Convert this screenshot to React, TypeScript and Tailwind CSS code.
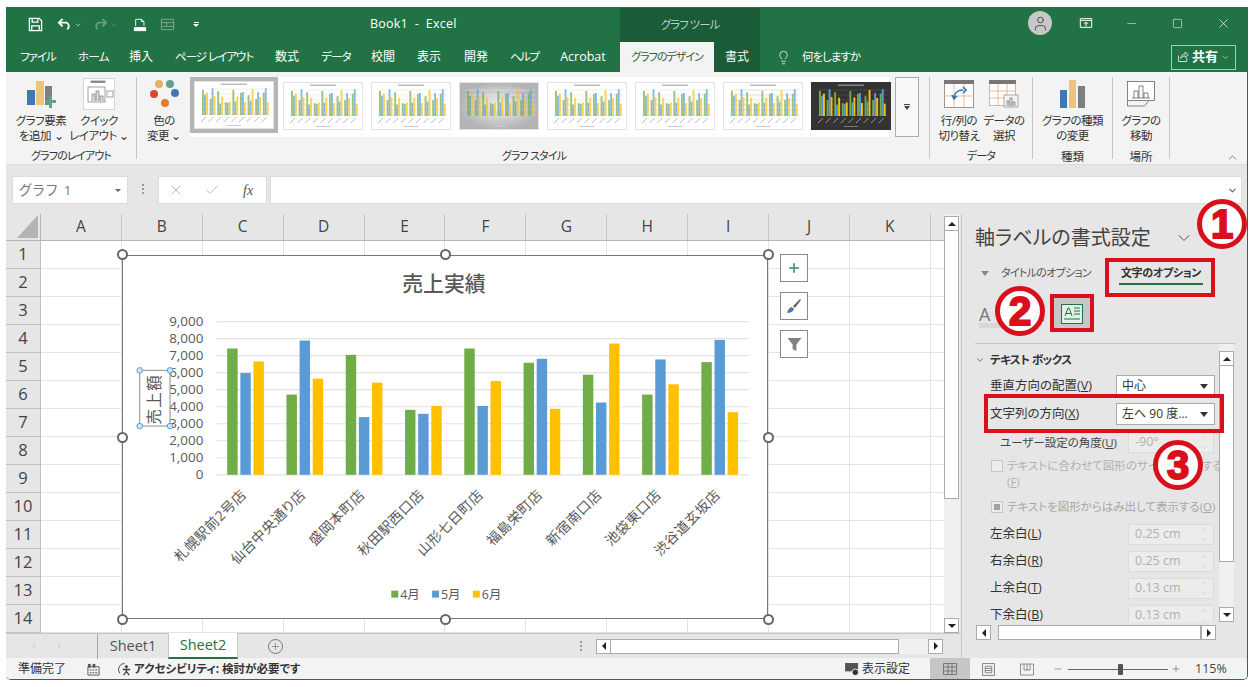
import { ChevronDown, ChevronUp, Lightbulb, Plus, X, Check, Minus, Square, User, ChevronRight, ChevronLeft } from 'lucide-react';

const bars = [
  [7420, 5980, 6660],
  [4714, 7890, 5650],
  [7050, 3390, 5415],
  [3818, 3584, 4050],
  [7420, 4050, 5510],
  [6584, 6818, 3877],
  [5883, 4247, 7714],
  [4714, 6779, 5318],
  [6623, 7928, 3680],
];
const shops = ['札幌駅前2号店', '仙台中央通り店', '盛岡本町店', '秋田駅西口店', '山形七日町店', '福島栄町店', '新宿南口店', '池袋東口店', '渋谷道玄坂店'];
const barColors = ['#70ad47', '#5b9bd5', '#ffc000'];
const columns = ['A', 'B', 'C', 'D', 'E', 'F', 'G', 'H', 'I', 'J', 'K'];
const rows = [1, 2, 3, 4, 5, 6, 7, 8, 9, 10, 11, 12, 13, 14];

const tabs = [
  { label: 'ファイル', cls: 'ml-[14px] w-[33px] text-[11.5px] tracking-[-1px]' },
  { label: 'ホーム', cls: 'ml-[25px] w-[30px] text-[11.5px] tracking-[-0.8px]' },
  { label: '挿入', cls: 'ml-[21px] w-[24px] text-[12px]' },
  { label: 'ページ レイアウト', cls: 'ml-[22px] w-[78px] text-[11.5px] tracking-[-1px]' },
  { label: '数式', cls: 'ml-[22px] w-[24px] text-[12px]' },
  { label: 'データ', cls: 'ml-[22px] w-[28px] text-[11.5px] tracking-[-0.8px]' },
  { label: '校閲', cls: 'ml-[22px] w-[24px] text-[12px]' },
  { label: '表示', cls: 'ml-[22px] w-[24px] text-[12px]' },
  { label: '開発', cls: 'ml-[23px] w-[24px] text-[12px]' },
  { label: 'ヘルプ', cls: 'ml-[22px] w-[28px] text-[11.5px] tracking-[-1.5px]' },
  { label: 'Acrobat', cls: 'ml-[22px] w-[46px] text-[12.5px]' },
];

function MiniChart({ variant, className }: { variant: 'plain' | 'gray' | 'dark' | 'striped' | 'grid'; className: string }) {
  const bg = variant === 'gray' ? 'url(#miniGray)' : variant === 'dark' ? '#333' : '#fff';
  const faded = variant === 'dark' ? 1 : 0.7;
  return (
    <svg viewBox="0 0 80 48" className={className}>
      <defs>
        <radialGradient id="miniGray">
          <stop offset="0" stopColor="#f4f4f4" />
          <stop offset="1" stopColor="#b4b4b4" />
        </radialGradient>
      </defs>
      <rect x="0.5" y="0.5" width="79" height="47" fill={bg} stroke={variant === 'dark' ? '#333' : '#e2e2e2'} />
      <rect x="27" y="2.5" width="26" height="1.5" fill={variant === 'dark' ? '#888' : '#bbb'} />
      {[8, 13, 18, 23, 28, 33].map((y) => (
        <line key={y} x1="7" x2="76" y1={y} y2={y} stroke={variant === 'grid' ? '#ccc' : variant === 'dark' ? '#555' : '#e4e4e4'} strokeWidth="0.6" />
      ))}
      {bars.map((group, i) =>
        group.map((v, j) => {
          const h = (v / 8000) * 27;
          return (
            <rect key={`${i}-${j}`} x={8 + i * 7.6 + j * 2} y={34 - h} width="1.9" height={h} fill={barColors[j]} opacity={faded} />
          );
        })
      )}
      {bars.map((_, i) => (
        <line key={i} x1={7 + i * 7.6} y1="41" x2={12 + i * 7.6} y2="36" stroke={variant === 'dark' ? '#999' : '#bbb'} strokeWidth="1" />
      ))}
      <rect x="33" y="44" width="14" height="1" fill={variant === 'dark' ? '#777' : '#ccc'} />
    </svg>
  );
}

function RibbonButton({ icon, top, bottom, className }: { icon: React.ReactNode; top: string; bottom: string; className: string }) {
  return (
    <div className={`flex flex-col items-center shrink-0 ${className}`}>
      <div className="h-[36px] flex items-center justify-center">{icon}</div>
      <div className="text-[11.5px] tracking-[-0.5px] leading-[15px] text-center whitespace-nowrap text-[#333] mt-[1px]">
        {top}
        <br />
        {bottom}
      </div>
    </div>
  );
}

function Spinner() {
  return (
    <div className="flex flex-col gap-[1px] text-[#c4c4c4]">
      <ChevronUp size={9} strokeWidth={1.5} />
      <ChevronDown size={9} strokeWidth={1.5} />
    </div>
  );
}

function NumField({ label, value }: { label: React.ReactNode; value: string }) {
  return (
    <div className="flex items-center justify-between h-[21px] mb-[6px] pl-[28px] pr-[5px]">
      <span className="text-[12.5px] text-[#333] whitespace-nowrap">{label}</span>
      <div className="w-[86px] h-[21px] border border-[#dcdcdc] bg-[#ececec] flex items-center justify-between pl-[6px] pr-[4px] text-[12.5px] text-[#b0b0b0]">
        {value}
        <Spinner />
      </div>
    </div>
  );
}

function Select({ value }: { value: string }) {
  return (
    <div className="w-[99px] h-[22px] border border-[#ababab] bg-white flex items-center justify-between pl-[5px] pr-[6px] text-[12px] text-[#333] whitespace-nowrap">
      {value}
      <span className="w-0 h-0 border-x-[4px] border-x-transparent border-t-[5px] border-t-[#333]" />
    </div>
  );
}

function ScrollBtn({ dir }: { dir: 'up' | 'down' | 'left' | 'right' }) {
  const arrow = {
    up: 'border-x-[4px] border-x-transparent border-b-[4px] border-b-[#222]',
    down: 'border-x-[4px] border-x-transparent border-t-[4px] border-t-[#222]',
    left: 'border-y-[4px] border-y-transparent border-r-[4px] border-r-[#222]',
    right: 'border-y-[4px] border-y-transparent border-l-[4px] border-l-[#222]',
  }[dir];
  return (
    <div className="w-[15px] h-[15px] shrink-0 bg-white border border-[#ababab] flex items-center justify-center">
      <span className={`w-0 h-0 ${arrow}`} />
    </div>
  );
}

function Mark({ n, className }: { n: string; className: string }) {
  return (
    <div className={`absolute w-[50px] h-[50px] rounded-full bg-white/90 border-[5px] border-[#d9101c] flex items-center justify-center text-[#d9101c] font-['Liberation_Sans',sans-serif] font-bold text-[40px] leading-none [-webkit-text-stroke:2px_#d9101c] ${className}`}>
      {n}
    </div>
  );
}

function Handle({ className }: { className: string }) {
  return <div className={`absolute w-[11px] h-[11px] rounded-full bg-white border-2 border-[#666] ${className}`} />;
}

function ChartSvg() {
  const y0 = 475;
  const scale = 154 / 9000;
  return (
    <svg viewBox="122 255 646 364" className="w-full h-full">
      <text x="444" y="290" textAnchor="middle" fontSize="21" fontWeight="500" fill="#595959">売上実績</text>
      {[0, 1, 2, 3, 4, 5, 6, 7, 8, 9].map((k) => {
        const y = y0 - k * 1000 * scale;
        return (
          <g key={k}>
            <line x1="215" x2="751" y1={y} y2={y} stroke="#e3e3e3" strokeWidth="1.2" />
            <text x="202" y={y + 4} textAnchor="end" fontSize="13.5" fill="#595959">
              {k === 0 ? '0' : `${k},000`}
            </text>
          </g>
        );
      })}
      {bars.map((group, i) => {
        const gx = 226 + i * 59.6;
        return (
          <g key={i}>
            {group.map((v, j) => (
              <rect key={j} x={gx + j * 13.2} y={y0 - v * scale} width="10.5" height={v * scale} fill={barColors[j]} />
            ))}
            <text
              textAnchor="end"
              fontSize="14"
              letterSpacing="0.5"
              fill="#595959"
              transform={`translate(${gx + 20},${y0 + 21}) rotate(-45)`}
            >
              {shops[i]}
            </text>
          </g>
        );
      })}
      {/* axis title */}
      <rect x="138" y="370" width="30.5" height="56" fill="none" stroke="#a0a0a0" strokeWidth="1.2" />
      <text transform="translate(158,399) rotate(-90)" textAnchor="middle" fontSize="15.5" letterSpacing="1.5" fill="#595959">売上額</text>
      {[[138, 370], [168.5, 370], [138, 426], [168.5, 426]].map(([x, y]) => (
        <circle key={`${x}${y}`} cx={x} cy={y} r="2.8" fill="#cfe6f7" stroke="#5b9bd5" strokeWidth="1" />
      ))}
      {/* legend */}
      {['4月', '5月', '6月'].map((t, i) => (
        <g key={t}>
          <rect x={391 + i * 41} y="591.5" width="7" height="7" fill={barColors[i]} />
          <text x={400 + i * 41} y="600" fontSize="12.5" fill="#595959">{t}</text>
        </g>
      ))}
    </svg>
  );
}

export default function App() {
  return (
    <div className="relative w-[1252px] h-[687px] bg-white pt-[7px] pl-[6px] overflow-hidden [font-feature-settings:'palt'] font-['Open_Sans','Noto_Sans_CJK_JP',sans-serif]">
      <div className="w-[1242px] h-[673px] flex flex-col border-r border-b border-[#217346] rounded-b-[5px] overflow-hidden">
        {/* Title bar */}
        <div className="h-[35px] shrink-0 bg-[#217346] flex items-center text-white relative">
          <svg viewBox="0 0 16 16" className="w-[15px] h-[15px] ml-[22px]" fill="none" stroke="#fff" strokeWidth="1.4">
            <path d="M1.5 1.5h10.5l2.5 2.5v10.5h-13z" />
            <path d="M4.5 1.5v4h6v-4M4 14.5v-5h8v5" />
          </svg>
          <svg viewBox="0 0 16 16" className="w-[15px] h-[15px] ml-[14px]" fill="none" stroke="#fff" strokeWidth="2">
            <path d="M6 2L2 6l4 4M2 6h8a4 4 0 0 1 1 7" />
          </svg>
          <ChevronDown size={8} strokeWidth={2} className="ml-[2px] text-[#cfe3d8]" />
          <svg viewBox="0 0 16 16" className="w-[15px] h-[15px] ml-[11px] opacity-30" fill="none" stroke="#fff" strokeWidth="2">
            <path d="M10 2l4 4-4 4M14 6H6a4 4 0 0 0-1 7" />
          </svg>
          <ChevronDown size={8} strokeWidth={2} className="ml-[2px] text-[#5a9a78]" />
          <svg viewBox="0 0 16 16" className="w-[14px] h-[16px] ml-[15px]" fill="none" stroke="#fff" strokeWidth="1">
            <path d="M3 9V1.5h6.5L12.500 4v5M9.500 1.500V4h3" />
            <rect x="1.500" y="11" width="13" height="3.500" fill="#fff" />
          </svg>
          <svg viewBox="0 0 16 16" className="w-[15px] h-[15px] ml-[13px] opacity-40" fill="none" stroke="#fff" strokeWidth="1">
            <path d="M1.500 2.500h13v11h-13zM1.500 6h13M1.500 10h13M7 6v4" />
          </svg>
          <div className="ml-[18px] flex flex-col items-center gap-[1px]">
            <span className="w-[5px] h-[1px] bg-white" />
            <span className="w-0 h-0 border-x-[3px] border-x-transparent border-t-[3px] border-t-white" />
          </div>
          <span className="ml-[171px] w-[90px] text-[12.5px] tracking-[0.2px] whitespace-nowrap">Book1&nbsp; -&nbsp; Excel</span>
          <div className="ml-[160px] w-[140px] self-stretch mt-[1px] bg-[#1a5c38] flex items-center justify-center text-[11.5px] tracking-[-1px] text-[#b9d3c4]">グラフ ツール</div>
          <div className="ml-[268px] w-[24px] h-[24px] rounded-full bg-[#c8c8c8] flex items-center justify-center -mt-[3px]">
            <User size={17} strokeWidth={1.3} className="text-[#444]" />
          </div>
          <svg viewBox="0 0 16 16" className="ml-[27px] -mt-[3px] w-[14px] h-[14px]" fill="none" stroke="#fff" strokeWidth="1.1">
            <path d="M1.500 3h13v10h-13zM1.500 5h13M8 12V7M5.800 9L8 6.800 10.200 9" />
          </svg>
          <Minus size={13} strokeWidth={1} className="ml-[32px] -mt-[3px]" />
          <Square size={11} strokeWidth={1.2} className="ml-[34px] -mt-[3px]" />
          <X size={15} strokeWidth={1.1} className="ml-[33px] -mt-[3px]" />
        </div>

        {/* Tabs */}
        <div className="h-[30px] shrink-0 bg-[#217346] flex items-center text-[12px] text-white whitespace-nowrap">
          {tabs.map((t) => (
            <span key={t.label} className={`text-center ${t.cls}`}>{t.label}</span>
          ))}
          <div className="ml-[14px] w-[94px] self-stretch bg-[#f3f3f3] text-[#2a5f43] text-[11px] tracking-[-1px] flex items-center justify-center">グラフのデザイン</div>
          <div className="w-[46px] self-stretch bg-[#1a5c38] flex items-center justify-center">書式</div>
          <Lightbulb size={15} strokeWidth={1.2} className="ml-[16px]" />
          <span className="ml-[11px] w-[58px] text-[11.5px] tracking-[-1px]">何をしますか</span>
          <div className="ml-[311px] w-[65px] h-[25px] border border-[#a8cbb8] flex items-center justify-center gap-[3px] text-[13px] font-bold">
            <svg viewBox="0 0 16 16" className="w-[12px] h-[12px]" fill="none" stroke="#fff" strokeWidth="1">
              <path d="M2 6v8h11V9M5 10c0-4 3-6 6-6V1.500L15 5l-4 3.500V6.500c-2 0-4 1-6 3.500z" />
            </svg>
            共有
            <ChevronDown size={9} strokeWidth={1.5} />
          </div>
        </div>

        {/* Ribbon */}
        <div className="h-[93px] shrink-0 bg-[#f3f3f3] flex border-b border-[#dcdcdc] relative">
          <div className="w-[131px] shrink-0 flex flex-col border-r border-[#c6c6c6] my-[5px]">
            <div className="flex h-[72px] -mt-[1px] pl-[6px]">
              <RibbonButton
                className="w-[58px]"
                top="グラフ要素"
                bottom="を追加 ⌄"
                icon={
                  <svg viewBox="0 0 30 30" className="w-[30px] h-[30px]">
                    <rect x="1" y="11" width="8" height="15" fill="#3f78b4" />
                    <rect x="10" y="2" width="8" height="24" fill="#eec47a" />
                    <rect x="19" y="7" width="7" height="19" fill="#7f7f7f" />
                    <path d="M19 21h4v-4h3v4h4v3h-4v5h-3v-5h-4z" fill="#5ea48c" />
                  </svg>
                }
              />
              <RibbonButton
                className="w-[58px]"
                top="クイック"
                bottom="レイアウト ⌄"
                icon={
                  <svg viewBox="0 0 32 32" className="w-[32px] h-[32px]" fill="none" stroke="#888" strokeWidth="0.8">
                    <rect x="0.500" y="0.500" width="31" height="31" fill="#fff" stroke="#ccc" />
                    <rect x="8" y="3" width="14" height="1.500" fill="#888" />
                    <rect x="5" y="9" width="17" height="15" />
                    <path d="M9 23v-7h3v7M13 23V13h3v10M17 23v-5h3v5" fill="#ddd" />
                    <rect x="24" y="13" width="6" height="6" />
                  </svg>
                }
              />
            </div>
            <div className="text-[11px] tracking-[-0.8px] text-center text-[#333] mt-[5px] whitespace-nowrap">グラフのレイアウト</div>
          </div>

          <div className="w-[793px] shrink-0 flex flex-col border-r border-[#c6c6c6] my-[5px]">
            <div className="flex h-[72px] -mt-[1px]">
              <RibbonButton
                className="w-[54px]"
                top="色の"
                bottom="変更 ⌄"
                icon={
                  <svg viewBox="0 0 32 30" className="w-[32px] h-[30px]">
                    <circle cx="11" cy="5" r="4" fill="#e8b063" />
                    <circle cx="22" cy="5" r="4" fill="#5ea48c" />
                    <circle cx="6" cy="15" r="4" fill="#d9482b" />
                    <circle cx="27" cy="14" r="4" fill="#3f78b4" />
                    <circle cx="17" cy="24" r="4" fill="#e47a2e" />
                  </svg>
                }
              />
              <div className="flex items-start bg-white h-[60px] mt-[1px] w-[699px] -ml-[1px]">
                <div className="w-[88px] h-[56px] border-[4px] border-[#b5b5b5] shrink-0">
                  <MiniChart variant="plain" className="w-full h-full" />
                </div>
                <MiniChart variant="striped" className="ml-[5px] mt-[5px] w-[80px] h-[48px] shrink-0" />
                <MiniChart variant="striped" className="ml-[8px] mt-[5px] w-[80px] h-[48px] shrink-0" />
                <MiniChart variant="gray" className="ml-[8px] mt-[5px] w-[80px] h-[48px] shrink-0" />
                <MiniChart variant="plain" className="ml-[8px] mt-[5px] w-[80px] h-[48px] shrink-0" />
                <MiniChart variant="plain" className="ml-[8px] mt-[5px] w-[80px] h-[48px] shrink-0" />
                <MiniChart variant="grid" className="ml-[8px] mt-[5px] w-[80px] h-[48px] shrink-0" />
                <MiniChart variant="dark" className="ml-[8px] mt-[5px] w-[80px] h-[48px] shrink-0" />
              </div>
              <div className="ml-[6px] w-[24px] h-[60px] mt-[1px] border border-[#ababab] bg-[#f8f8f8] flex flex-col items-center justify-center gap-[1px] shrink-0">
                <span className="w-[6px] h-[1px] bg-[#444]" />
                <span className="w-0 h-0 border-x-[3.500px] border-x-transparent border-t-[4px] border-t-[#444]" />
              </div>
            </div>
            <div className="text-[11px] tracking-[-0.8px] text-center text-[#333] mt-[5px] pl-[2px]">グラフ スタイル</div>
          </div>

          <div className="w-[103px] shrink-0 flex flex-col border-r border-[#c6c6c6] my-[5px]">
            <div className="flex h-[72px] -mt-[1px] pl-[6px]">
              <RibbonButton
                className="w-[46px]"
                top="行/列の"
                bottom="切り替え"
                icon={
                  <svg viewBox="0 0 30 28" className="w-[30px] h-[28px]" fill="none">
                    <rect x="0.500" y="0.500" width="29" height="27" fill="#fff" stroke="#999" />
                    <rect x="0" y="0" width="30" height="4" fill="#777" />
                    <path d="M20 4v23M10 4v23M0 16h30" stroke="#e8a878" strokeWidth="0.8" />
                    <path d="M10 19c0-6 4-9 9-9M8 15l2 4 3-3M19 7l3 3-3 3" stroke="#2f75b5" strokeWidth="1.600" />
                  </svg>
                }
              />
              <RibbonButton
                className="w-[44px]"
                top="データの"
                bottom="選択"
                icon={
                  <svg viewBox="0 0 30 28" className="w-[30px] h-[28px]" fill="none">
                    <rect x="0.500" y="0.500" width="26" height="25" fill="#fff" stroke="#bbb" />
                    <rect x="0" y="0" width="27" height="4" fill="#777" />
                    <path d="M9 4v21M18 4v21M0 11h27M0 18h27" stroke="#e8a878" strokeWidth="0.8" />
                    <rect x="15" y="15" width="14" height="12" fill="#f3f3f3" stroke="#888" strokeWidth="0.7" />
                    <path d="M18 26v-5h2v5M21 26v-8h2v8M24 26v-4h2v4" stroke="#666" strokeWidth="0.7" />
                  </svg>
                }
              />
            </div>
            <div className="text-[11px] tracking-[-0.8px] text-center text-[#333] mt-[5px]">データ</div>
          </div>

          <div className="w-[80px] shrink-0 flex flex-col border-r border-[#c6c6c6] my-[5px]">
            <div className="flex h-[72px] -mt-[1px] justify-center">
              <RibbonButton
                className="w-[78px]"
                top="グラフの種類"
                bottom="の変更"
                icon={
                  <svg viewBox="0 0 26 28" className="w-[26px] h-[28px]">
                    <rect x="0" y="10" width="7" height="18" fill="#3f78b4" />
                    <rect x="9" y="0" width="7" height="28" fill="#eec47a" />
                    <rect x="18" y="6" width="7" height="22" fill="#7f7f7f" />
                  </svg>
                }
              />
            </div>
            <div className="text-[11.5px] text-center text-[#333] mt-[5px]">種類</div>
          </div>

          <div className="w-[57px] shrink-0 flex flex-col border-r border-[#c6c6c6] my-[5px]">
            <div className="flex h-[72px] -mt-[1px] justify-center">
              <RibbonButton
                className="w-[50px]"
                top="グラフの"
                bottom="移動"
                icon={
                  <svg viewBox="0 0 28 26" className="w-[28px] h-[26px]" fill="none" stroke="#666" strokeWidth="0.8">
                    <rect x="0.500" y="0.500" width="27" height="19" fill="#fff" />
                    <path d="M7 17v-7h4v7M12 17V5h4v12M17 17v-5h4v5M5 17h18M0.500 20l-0 5h17l4-5" />
                  </svg>
                }
              />
            </div>
            <div className="text-[11.5px] text-center text-[#333] mt-[5px]">場所</div>
          </div>
          <ChevronUp size={13} strokeWidth={1.2} className="absolute right-[8px] bottom-[0px] text-[#444]" />
        </div>

        {/* Formula bar */}
        <div className="h-[49px] shrink-0 bg-[#e6e6e6] flex items-start pt-[11px]">
          <div className="ml-[6px] w-[116px] h-[28px] bg-white border border-[#dcdcdc] flex items-center justify-between pl-[6px] pr-[6px] text-[13.5px] text-[#777] tracking-[1.5px]">
            グラフ 1
            <span className="w-0 h-0 border-x-[3px] border-x-transparent border-t-[3px] border-t-[#666]" />
          </div>
          <div className="ml-[14px] mt-[8px] flex flex-col gap-[2px]">
            <span className="w-[2px] h-[2px] bg-[#999]" />
            <span className="w-[2px] h-[2px] bg-[#999]" />
            <span className="w-[2px] h-[2px] bg-[#999]" />
          </div>
          <div className="ml-[14px] w-[109px] h-[28px] bg-white border border-[#dcdcdc] flex items-center pl-[9px] text-[#b0b0b0]">
            <X size={16} strokeWidth={1.3} />
            <Check size={16} strokeWidth={1.3} className="ml-[20px]" />
            <span className="ml-[23px] font-['Liberation_Serif',serif] italic text-[14px] text-[#555]">fx</span>
          </div>
          <div className="ml-[3px] w-[972px] h-[28px] bg-white border border-[#dcdcdc] flex items-center justify-end pr-[3px]">
            <ChevronDown size={11} strokeWidth={2.5} className="text-[#666]" />
          </div>
        </div>

        {/* Main */}
        <div className="h-[444px] shrink-0 flex bg-[#e6e6e6]">
          <div className="w-[955px] shrink-0 flex flex-col">
            <div className="h-[419px] flex">
              {/* Sheet grid */}
              <div className="relative w-[938px] h-[419px] overflow-hidden bg-white">
                <div className="flex h-[27px] bg-[#e6e6e6] border-b border-[#b5b5b5]">
                  <div className="w-[35px] shrink-0 border-r border-[#b5b5b5] relative">
                    <div className="absolute left-[11px] top-[1px] w-0 h-0 border-l-[21px] border-l-transparent border-b-[23px] border-b-[#b4b4b4]" />
                  </div>
                  {columns.map((c) => (
                    <div key={c} className="w-[80.900px] shrink-0 border-r border-[#c6c6c6] flex items-center justify-center text-[15.500px] text-[#444]">{c}</div>
                  ))}
                </div>
                {rows.map((r) => (
                  <div key={r} className="flex h-[28px]">
                    <div className="w-[35px] shrink-0 bg-[#e6e6e6] border-r border-b border-[#c0c0c0] flex items-center justify-center text-[16.500px] text-[#444]">{r}</div>
                    {columns.map((c) => (
                      <div key={c} className="w-[80.900px] shrink-0 border-r border-b border-[#e2e2e2]" />
                    ))}
                    <div className="flex-1 border-b border-[#e2e2e2]" />
                  </div>
                ))}

                {/* Chart over the grid */}
                <div className="absolute left-[116px] top-[41px] w-[646px] h-[364px] bg-white border-[1.500px] border-[#777]">
                  <ChartSvg />
                </div>
                <Handle className="left-[111px] top-[35px]" />
                <Handle className="left-[434px] top-[35px]" />
                <Handle className="left-[757px] top-[35px]" />
                <Handle className="left-[111px] top-[218px]" />
                <Handle className="left-[757px] top-[218px]" />
                <Handle className="left-[111px] top-[400px]" />
                <Handle className="left-[434px] top-[400px]" />
                <Handle className="left-[757px] top-[400px]" />

                <div className="absolute left-[774px] top-[40px] w-[28px] h-[28px] bg-white border border-[#8a8a8a] flex items-center justify-center">
                  <Plus size={14} strokeWidth={3.500} className="text-[#5ea48c]" />
                </div>
                <div className="absolute left-[774px] top-[78px] w-[28px] h-[28px] bg-white border border-[#8a8a8a] flex items-center justify-center">
                  <svg viewBox="0 0 16 16" className="w-[16px] h-[16px]">
                    <path d="M1 15c1-4 3-6 5-6l2 2c-1 3-4 4-7 4z" fill="#4a78b8" />
                    <path d="M7 8l7-7 1 1-6 8z" fill="#666" />
                  </svg>
                </div>
                <div className="absolute left-[774px] top-[116px] w-[28px] h-[28px] bg-white border border-[#8a8a8a] flex items-center justify-center">
                  <svg viewBox="0 0 16 16" className="w-[15px] h-[15px]">
                    <path d="M0.500 1h15L10 8v7l-4-2V8z" fill="#808080" />
                  </svg>
                </div>
              </div>
              {/* Vertical scrollbar */}
              <div className="w-[17px] shrink-0 flex flex-col pt-[2px] bg-[#f0f0f0] border-r border-[#e6e6e6]">
                <ScrollBtn dir="up" />
                <div className="w-[15px] h-[268px] bg-white border-x border-b border-[#ababab] shrink-0" />
                <div className="flex-1" />
                <ScrollBtn dir="down" />
              </div>
            </div>

            {/* Sheet tabs */}
            <div className="h-[25px] flex items-center bg-[#e6e6e6] border-t border-[#c6c6c6] relative">
              <ChevronLeft size={10} strokeWidth={2} className="ml-[23px] text-[#bdbdbd]" />
              <ChevronRight size={10} strokeWidth={2} className="ml-[15px] text-[#bdbdbd]" />
              <div className="ml-[33px] w-[71px] h-[25px] border-l border-[#aaa] flex items-center justify-center text-[14.500px] text-[#555]">Sheet1</div>
              <div className="w-[70px] h-[26px] -mt-[1px] bg-white border-x border-[#c6c6c6] border-b-2 border-b-[#217346] flex items-center justify-center text-[14.500px] text-[#217346]">Sheet2</div>
              <div className="ml-[30px] w-[15px] h-[15px] rounded-full border border-[#777] flex items-center justify-center text-[#666]">
                <Plus size={11} strokeWidth={1.3} />
              </div>
              <div className="ml-[297px] flex flex-col gap-[2px]">
                <span className="w-[2px] h-[2px] bg-[#999]" />
                <span className="w-[2px] h-[2px] bg-[#999]" />
                <span className="w-[2px] h-[2px] bg-[#999]" />
              </div>
              <div className="ml-[14px] flex items-center">
                <ScrollBtn dir="left" />
                <div className="w-[288px] h-[15px] bg-white border-y border-r border-[#ababab]" />
                <div className="w-[29px] h-[15px] bg-[#f0f0f0]" />
                <ScrollBtn dir="right" />
              </div>
            </div>
          </div>

          {/* Format pane */}
          <aside className="w-[286px] shrink-0 flex flex-col border-l border-[#c6c6c6] bg-[#e6e6e6] relative">
            <div className="h-[44px] pt-[9px] pl-[13px] flex items-start text-[20px] text-[#444] whitespace-nowrap">
              <span className="w-[176px]">軸ラベルの書式設定</span>
              <ChevronDown size={20} strokeWidth={1.1} className="ml-[23px] mt-[5px]" />
            </div>
            <div className="h-[34px] flex items-start pt-[7px] pl-[19px] whitespace-nowrap">
              <span className="mt-[6px] w-0 h-0 border-x-[4px] border-x-transparent border-t-[5px] border-t-[#888]" />
              <span className="ml-[12px] w-[88px] text-[11px] tracking-[-0.7px] text-[#555]">タイトルのオプション</span>
              <div className="ml-[30px] flex flex-col items-center w-[84px]">
                <span className="text-[11px] tracking-[-0.3px] font-bold text-[#333]">文字のオプション</span>
                <span className="w-[84px] h-[2px] mt-[1px] bg-[#217346]" />
              </div>
            </div>
            <div className="h-[52px] ml-[13px] mr-[12px] border-b border-[#c6c6c6] flex items-start pt-[6px] relative">
              <div className="ml-[4px] mt-[7px] text-[18px] text-[#777] leading-none border-b-[5px] border-[#d8d8d8] w-[34px]">A</div>
              <div className="ml-[20px] mt-[7px] text-[18px] text-[#999] leading-none w-[8px]">A</div>
              <div className="ml-[13px] w-[36px] h-[31px] bg-[#c6c6c6] flex items-center justify-center">
                <svg viewBox="0 0 22 20" className="w-[22px] h-[20px]">
                  <rect x="0.500" y="0.500" width="21" height="19" fill="#dff0e6" stroke="#217346" />
                  <path d="M4 12l3-8h1l3 8M5 9.500h5" stroke="#217346" fill="none" />
                  <path d="M13 4h6M13 7h6M13 10h6M3 15h16" stroke="#217346" />
                </svg>
              </div>
            </div>
            <div className="h-[278px] flex overflow-hidden pr-[13px]">
              <div className="w-[258px] overflow-hidden">
                <div className="flex items-center h-[31px] pl-[13px] text-[11.500px] tracking-[-0.5px] font-bold text-[#333] whitespace-nowrap">
                  <ChevronDown size={10} strokeWidth={1.500} className="mr-[5px]" />
                  テキスト ボックス
                </div>
                <div className="flex items-center justify-between h-[22px] mb-[6px] pl-[28px] pr-[4px] text-[12.500px] text-[#333] whitespace-nowrap">
                  <span>垂直方向の配置(<u>V</u>)</span>
                  <Select value="中心" />
                </div>
                <div className="flex items-center justify-between h-[22px] mb-[7px] pl-[28px] pr-[4px] text-[12.500px] text-[#333] whitespace-nowrap">
                  <span>文字列の方向(<u>X</u>)</span>
                  <Select value="左へ 90 度…" />
                </div>
                <div className="flex items-center justify-between h-[21px] pl-[38px] pr-[5px] whitespace-nowrap">
                  <span className="text-[11.500px] text-[#444]">ユーザー設定の角度(<u>U</u>)</span>
                  <div className="w-[86px] h-[21px] border border-[#dcdcdc] bg-[#ececec] flex items-center justify-between pl-[6px] pr-[4px] text-[12.500px] text-[#b0b0b0]">
                    -90°
                    <Spinner />
                  </div>
                </div>
                <div className="mt-[5px] pl-[29px] flex items-start text-[11.500px] leading-[16px] text-[#b0b0b0] whitespace-nowrap">
                  <span className="mt-[2px] w-[12px] h-[12px] border border-[#c6c6c6] bg-[#ececec] shrink-0" />
                  <span className="ml-[4px]">テキストに合わせて図形のサイズを調整する<br />(<u>F</u>)</span>
                </div>
                <div className="mt-[9px] pl-[29px] flex items-center text-[11.500px] leading-[16px] text-[#a8a8a8] whitespace-nowrap">
                  <span className="w-[12px] h-[12px] border border-[#c6c6c6] bg-[#ececec] shrink-0 flex items-center justify-center">
                    <span className="w-[6px] h-[6px] bg-[#a0a0a0]" />
                  </span>
                  <span className="ml-[4px]">テキストを図形からはみ出して表示する(<u>O</u>)</span>
                </div>
                <div className="mt-[9px]">
                  <NumField label={<>左余白(<u>L</u>)</>} value="0.25 cm" />
                  <NumField label={<>右余白(<u>R</u>)</>} value="0.25 cm" />
                  <NumField label={<>上余白(<u>T</u>)</>} value="0.13 cm" />
                  <NumField label={<>下余白(<u>B</u>)</>} value="0.13 cm" />
                </div>
              </div>
              <div className="w-[15px] flex flex-col pt-[7px] bg-[#f0f0f0]">
                <ScrollBtn dir="up" />
                <div className="w-[15px] h-[196px] bg-white border-x border-b border-[#ababab] shrink-0" />
                <div className="flex-1" />
                <ScrollBtn dir="down" />
              </div>
            </div>
            <div className="flex items-start ml-[14px] mt-[3px] relative">
              <ScrollBtn dir="left" />
              <div className="ml-[7px] w-[203px] h-[15px] bg-white border border-[#ababab]" />
              <ScrollBtn dir="right" />
            </div>
          </aside>
        </div>

        {/* Status bar */}
        <div className="h-[22px] shrink-0 bg-[#f3f3f3] flex items-center text-[12px] text-[#333] whitespace-nowrap">
          <span className="ml-[12px] w-[48px]">準備完了</span>
          <svg viewBox="0 0 14 14" className="ml-[21px] w-[13px] h-[13px]" fill="#555">
            <path d="M1 4h12v9H1z" fill="none" stroke="#555" />
            <rect x="1" y="1" width="3" height="4" />
            <rect x="6" y="1" width="3" height="4" />
            <path d="M3 7h2v1H3zM6 7h2v1H6zM9 7h2v1H9zM3 10h2v1H3zM6 10h2v1H6zM9 10h2v1H9z" />
          </svg>
          <svg viewBox="0 0 16 16" className="ml-[17px] w-[15px] h-[15px]" fill="none" stroke="#444" strokeWidth="1">
            <path d="M8 1.500a6.500 6.500 0 0 0-5 10.500" />
            <circle cx="10" cy="5" r="1.200" fill="#444" />
            <path d="M6 8h8M10 7v3l-3 4M10 10l3 4" strokeWidth="1.400" />
          </svg>
          <span className="ml-[2px] font-bold text-[11.500px] w-[165px]">アクセシビリティ: 検討が必要です</span>
          <svg viewBox="0 0 16 14" className="ml-[546px] w-[15px] h-[13px]">
            <rect x="0" y="0" width="14" height="9" fill="#555" />
            <circle cx="11" cy="10" r="3.500" fill="#333" stroke="#f3f3f3" />
          </svg>
          <span className="ml-[2px] w-[50px] text-[12px]">表示設定</span>
          <div className="ml-[18px] w-[40px] self-stretch bg-[#c6c6c6] flex items-center justify-center">
            <svg viewBox="0 0 14 12" className="w-[14px] h-[12px]" fill="none" stroke="#666" strokeWidth="0.8">
              <path d="M.5.500h13v11H.5zM.5 4h13M.5 8h13M5 .500v11M9 .500v11" />
            </svg>
          </div>
          <svg viewBox="0 0 12 12" className="ml-[12px] w-[13px] h-[13px]" fill="none" stroke="#777" strokeWidth="0.8">
            <path d="M.5.500h11v11H.5zM3 3h6v6H3zM3 5h6M3 7h6" />
          </svg>
          <svg viewBox="0 0 14 12" className="ml-[25px] w-[14px] h-[13px]" fill="none" stroke="#777" strokeWidth="0.8">
            <path d="M.5.500h13v11H.5zM4 .500v6h6v-6M7 .500v6" />
          </svg>
          <Minus size={10} strokeWidth={1.200} className="ml-[19px] text-[#444]" />
          <div className="ml-[5px] w-[100px] h-[1px] bg-[#666] relative">
            <span className="absolute left-[50px] -top-[5px] w-[5px] h-[11px] bg-[#555] rounded-[1px]" />
          </div>
          <Plus size={10} strokeWidth={1.200} className="ml-[3px] text-[#444]" />
          <span className="ml-[14px] text-[12.500px] text-[#444]">115%</span>
        </div>
      </div>

      {/* Red annotations */}
      <div className="absolute left-[1105px] top-[258px] w-[110px] h-[39px] border-[4px] border-[#d9101c]" />
      <div className="absolute left-[1050px] top-[294px] w-[44px] h-[38px] border-[4px] border-[#d9101c]" />
      <div className="absolute left-[984px] top-[394px] w-[240px] h-[39px] border-[4px] border-[#d9101c]" />
      <Mark n="1" className="left-[1197px] top-[199px]" />
      <Mark n="2" className="left-[995px] top-[286px]" />
      <Mark n="3" className="left-[1153px] top-[440px]" />
    </div>
  );
}
